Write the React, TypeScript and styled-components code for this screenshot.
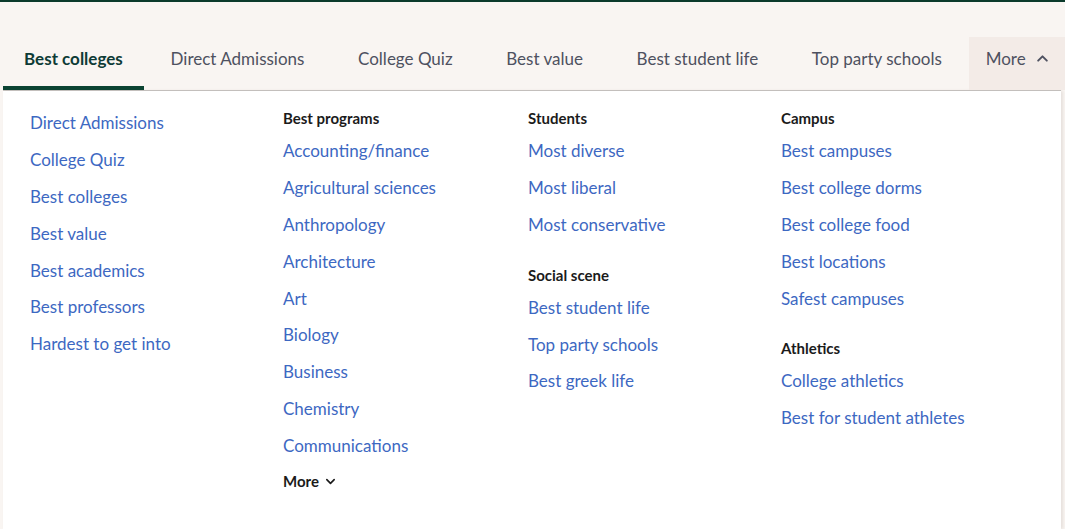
import { FC } from 'react';
import styled, { createGlobalStyle } from 'styled-components';

const GlobalStyle = createGlobalStyle`
  html, body {
    margin: 0;
    padding: 0;
    background: #f9f5f2;
    font-family: Lato, 'Open Sans', sans-serif;
    overflow: hidden;
  }
`;

const Page = styled.div`
  height: 529px;
  border-top: 2px solid #0b3a2b;
  box-sizing: border-box;
`;

const Shell = styled.div`
  margin-left: 3px;
  width: 1058px;
  padding-top: 35px;
`;

const TabBar = styled.nav`
  display: flex;
  height: 53px;
  border-bottom: 1px solid #c9c5c2;
`;

const Tab = styled.div<{ $active?: boolean; $open?: boolean }>`
  position: relative;
  display: flex;
  align-items: center;
  gap: 10px;
  padding: 0 ${(p) => (p.$active ? '21px' : '26.8px')} 11px;
  font-size: 17px;
  font-weight: ${(p) => (p.$active ? 700 : 400)};
  color: ${(p) => (p.$active ? '#0e3b36' : '#4e5160')};
  background: ${(p) => (p.$open ? '#f3ebe7' : 'transparent')};
  white-space: nowrap;
  cursor: pointer;

  &::after {
    content: '';
    display: ${(p) => (p.$active ? 'block' : 'none')};
    position: absolute;
    left: 0;
    right: 0;
    bottom: 0;
    height: 4px;
    background: #0b4332;
  }
`;

const OpenTab = styled(Tab)`
  margin-left: auto;
  padding: 0 20px 11px 17px;
`;

const Panel = styled.div`
  height: 438px;
  background: #fff;
  box-shadow: 2px 0 3px rgba(60, 40, 30, 0.1);
  display: grid;
  grid-template-columns: 253px 245px 253px 1fr;
  padding: 13px 0 0 27px;
  box-sizing: border-box;
`;

const Column = styled.div`
  display: flex;
  flex-direction: column;
`;

const Heading = styled.div<{ $first?: boolean }>`
  font-size: 15px;
  font-weight: 700;
  line-height: 20px;
  color: #1b1b1b;
  margin: ${(p) => (p.$first ? 4 : 22)}px 0 4px;
`;

const NavLink = styled.a`
  display: block;
  font-size: 17px;
  line-height: 25px;
  padding: 6px 0 5.9px;
  color: #3d68c2;
  text-decoration: none;
  white-space: nowrap;
`;

const MoreToggle = styled.div`
  display: flex;
  align-items: center;
  gap: 6px;
  margin-top: 7px;
  font-size: 15px;
  font-weight: 700;
  line-height: 20px;
  color: #1b1b1b;
`;

type Section = { title?: string; links: string[] };

const columns: Section[][] = [
  [
    {
      links: [
        'Direct Admissions',
        'College Quiz',
        'Best colleges',
        'Best value',
        'Best academics',
        'Best professors',
        'Hardest to get into',
      ],
    },
  ],
  [
    {
      title: 'Best programs',
      links: [
        'Accounting/finance',
        'Agricultural sciences',
        'Anthropology',
        'Architecture',
        'Art',
        'Biology',
        'Business',
        'Chemistry',
        'Communications',
      ],
    },
  ],
  [
    { title: 'Students', links: ['Most diverse', 'Most liberal', 'Most conservative'] },
    { title: 'Social scene', links: ['Best student life', 'Top party schools', 'Best greek life'] },
  ],
  [
    {
      title: 'Campus',
      links: ['Best campuses', 'Best college dorms', 'Best college food', 'Best locations', 'Safest campuses'],
    },
    { title: 'Athletics', links: ['College athletics', 'Best for student athletes'] },
  ],
];

const tabs = ['Direct Admissions', 'College Quiz', 'Best value', 'Best student life', 'Top party schools'];

const Chevron: FC<{ up?: boolean; size?: number }> = ({ up, size = 12 }) => (
  <svg width={size} height={size} viewBox="0 0 12 12" fill="none">
    <path
      d={up ? 'M2 8l4-4 4 4' : 'M2 4l4 4 4-4'}
      stroke="currentColor"
      strokeWidth={1.8}
      strokeLinecap="round"
      strokeLinejoin="round"
    />
  </svg>
);

const App: FC = () => (
  <Page>
    <GlobalStyle />
    <Shell>
      <TabBar>
        <Tab $active>Best colleges</Tab>
        {tabs.map((t) => (
          <Tab key={t}>{t}</Tab>
        ))}
        <OpenTab $open>
          More
          <Chevron up size={13} />
        </OpenTab>
      </TabBar>
      <Panel>
        {columns.map((sections, ci) => (
          <Column key={ci}>
            {sections.map((s, si) => (
              <div key={si}>
                {s.title && <Heading $first={si === 0}>{s.title}</Heading>}
                {s.links.map((l) => (
                  <NavLink key={l} href="#">
                    {l}
                  </NavLink>
                ))}
              </div>
            ))}
            {ci === 1 && (
              <MoreToggle>
                More
                <Chevron size={11} />
              </MoreToggle>
            )}
          </Column>
        ))}
      </Panel>
    </Shell>
  </Page>
);

export default App;
